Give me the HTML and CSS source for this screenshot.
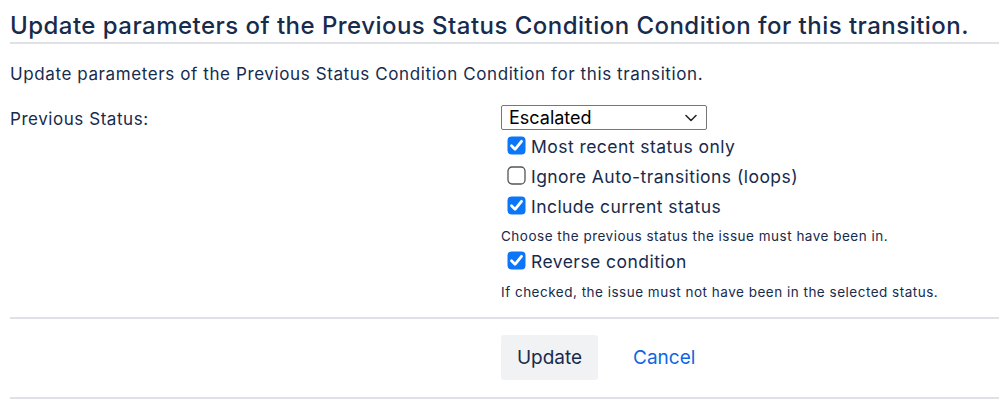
FILE: index.html
```html
<!DOCTYPE html>
<html>
<head>
<meta charset="utf-8">
<link rel="stylesheet" href="styles.css">
</head>
<body>
<div class="page">
  <h2 class="title">Update parameters of the Previous Status Condition Condition for this transition.</h2>
  <p class="intro">Update parameters of the Previous Status Condition Condition for this transition.</p>
  <div class="form">
    <div class="label">Previous Status:</div>
    <div class="field">
      <div class="select"><span>Escalated</span><svg class="chev" width="12" height="8" viewBox="0 0 12 8"><path d="M1 1.5 L6 6.5 L11 1.5" fill="none" stroke="#222" stroke-width="1.5" stroke-linecap="round" stroke-linejoin="round"/></svg></div>
      <div class="check"><svg class="box" width="19" height="19" viewBox="0 0 19 19"><rect x="0.5" y="0.5" width="18" height="18" rx="4" fill="#0b76f7"/><path d="M4.5 9.8 L8 13.3 L14.5 5.3" fill="none" stroke="#fff" stroke-width="2.8" stroke-linecap="round" stroke-linejoin="round"/></svg><span>Most recent status only</span></div>
      <div class="check"><svg class="box" width="19" height="19" viewBox="0 0 19 19"><rect x="1" y="1" width="17" height="17" rx="4" fill="#fff" stroke="#555" stroke-width="1.3"/></svg><span>Ignore Auto-transitions (loops)</span></div>
      <div class="check"><svg class="box" width="19" height="19" viewBox="0 0 19 19"><rect x="0.5" y="0.5" width="18" height="18" rx="4" fill="#0b76f7"/><path d="M4.5 9.8 L8 13.3 L14.5 5.3" fill="none" stroke="#fff" stroke-width="2.8" stroke-linecap="round" stroke-linejoin="round"/></svg><span>Include current status</span></div>
      <div class="help">Choose the previous status the issue must have been in.</div>
      <div class="check"><svg class="box" width="19" height="19" viewBox="0 0 19 19"><rect x="0.5" y="0.5" width="18" height="18" rx="4" fill="#0b76f7"/><path d="M4.5 9.8 L8 13.3 L14.5 5.3" fill="none" stroke="#fff" stroke-width="2.8" stroke-linecap="round" stroke-linejoin="round"/></svg><span>Reverse condition</span></div>
      <div class="help help-last">If checked, the issue must not have been in the selected status.</div>
    </div>
  </div>
  <div class="buttons">
    <button class="btn">Update</button>
    <a class="cancel" href="#">Cancel</a>
  </div>
</div>
</body>
</html>
```
FILE: styles.css
```css
html, body {
  margin: 0;
  padding: 0;
  background: #fff;
}
body {
  font-family: Inter, "Liberation Sans", sans-serif;
  color: #172b4d;
}
.page {
  padding-left: 10px;
}
.title {
  margin: 0;
  padding-top: 10px;
  font-size: 24px;
  letter-spacing: 0.47px;
  font-weight: 500;
  line-height: 32px;
  border-bottom: 2px solid #dfe1e6;
}
.intro {
  margin: 0;
  padding-top: 18px;
  font-size: 17px;
  letter-spacing: 0.6px;
  line-height: 24px;
}
.form {
  display: grid;
  grid-template-columns: 491px 1fr;
  margin-top: 19px;
}
.label {
  font-size: 17px;
  letter-spacing: 0.55px;
  line-height: 24px;
  padding-top: 2px;
}
.field {
  display: flex;
  flex-direction: column;
  align-items: flex-start;
}
.select {
  width: 206px;
  height: 25px;
  box-sizing: border-box;
  border: 1px solid #767676;
  border-radius: 2px;
  display: flex;
  align-items: center;
  justify-content: space-between;
  padding: 0 9px 0 7px;
  font-size: 18px;
  color: #000;
}
.check {
  display: flex;
  align-items: center;
  gap: 5px;
  padding-left: 6px;
  height: 30px;
  font-size: 17.5px;
  letter-spacing: 0.45px;
}
.check span {
  padding-top: 2px;
}
.box {
  flex: none;
}
.help {
  font-size: 13.5px;
  letter-spacing: 0.5px;
  line-height: 18px;
  padding-top: 7px;
}
.help-last {
  padding-top: 8px;
}
.buttons {
  margin-top: 16px;
  border-top: 2px solid #dfe1e6;
  border-bottom: 2px solid #dfe1e6;
  padding: 16px 0 17px 491px;
  display: flex;
  align-items: center;
  gap: 35px;
}
.btn {
  width: 97px;
  height: 45px;
  border: none;
  border-radius: 3px;
  background: #f1f2f4;
  color: #172b4d;
  font-family: inherit;
  font-size: 19px;
  padding: 0;
}
.cancel {
  color: #0c66e4;
  text-decoration: none;
  font-size: 19px;
}
```
